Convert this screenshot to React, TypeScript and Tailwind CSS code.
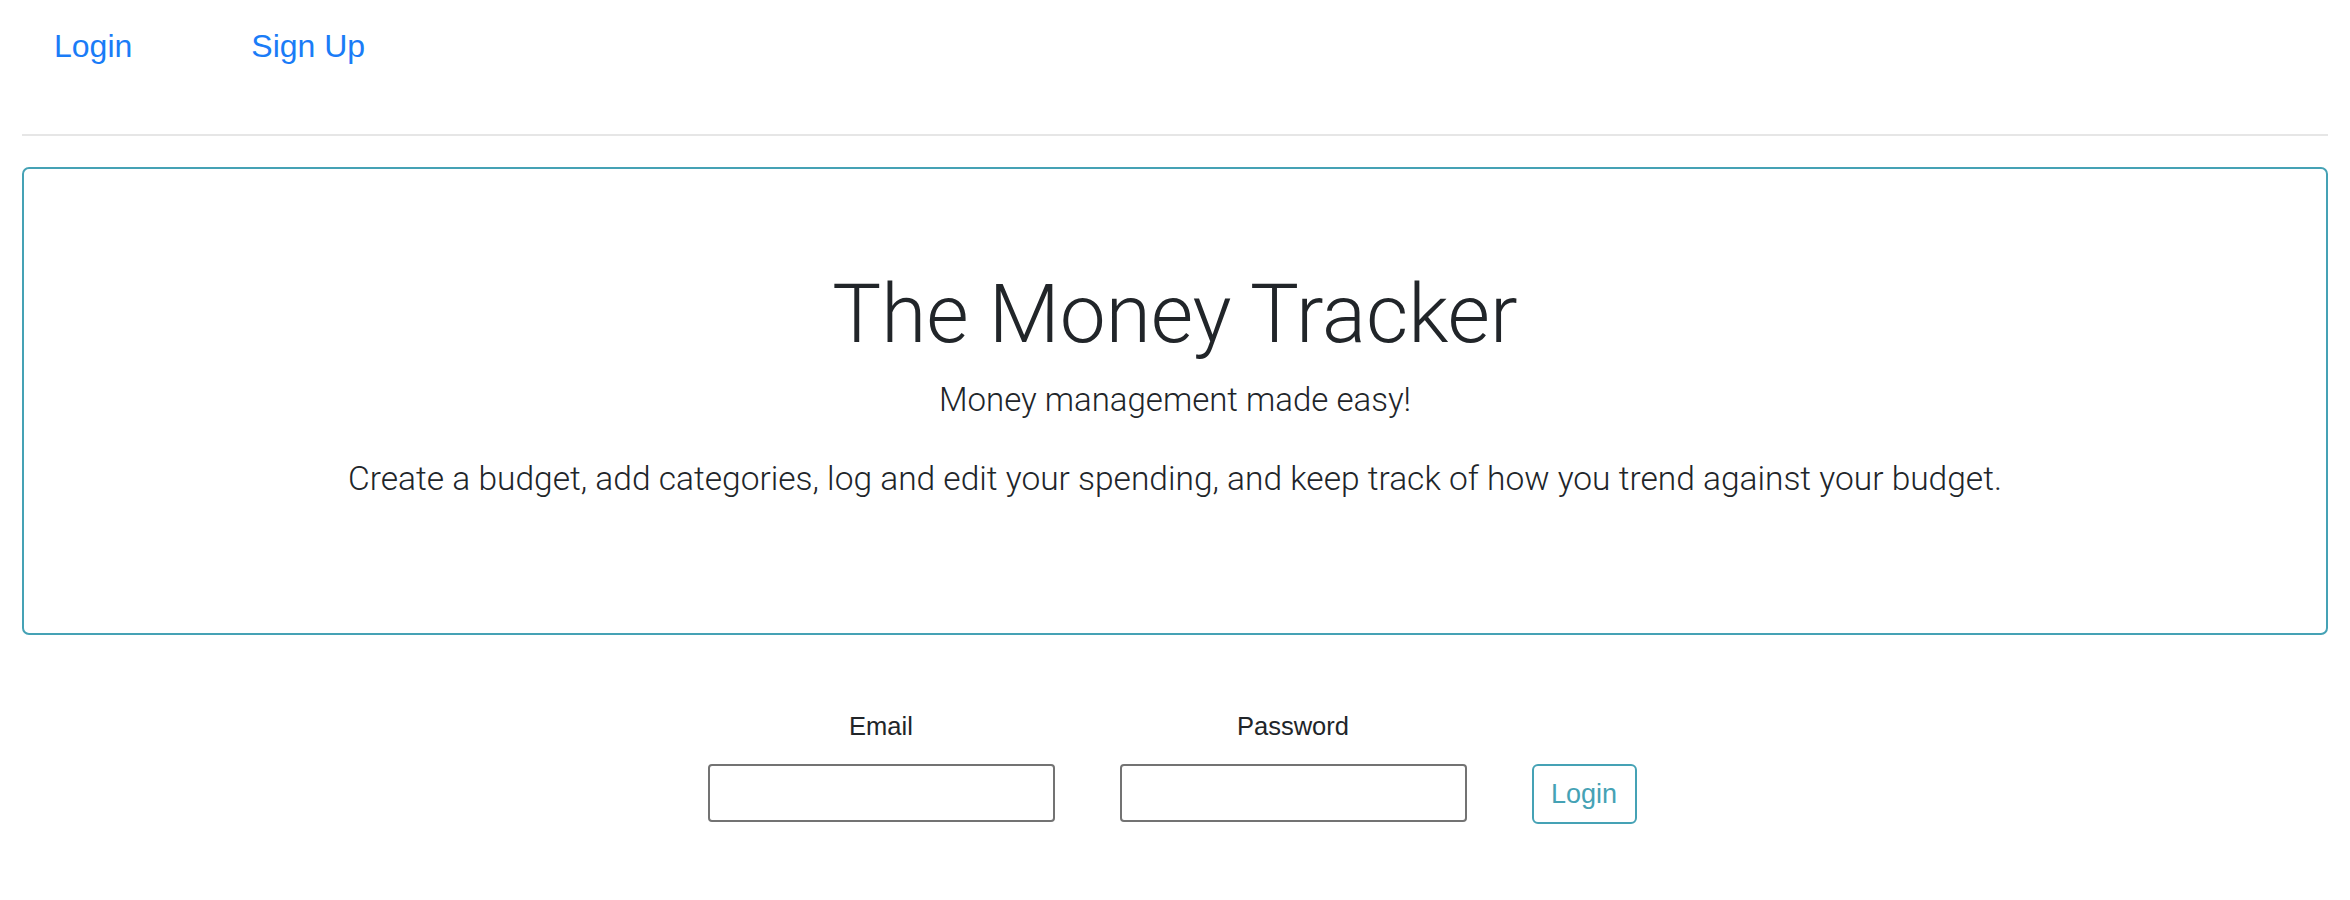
import React, { useState } from "react";

const sans = "font-['Liberation_Sans','Helvetica_Neue',Arial,sans-serif]";
const light = "font-['Roboto','Helvetica_Neue',Arial,sans-serif] font-light";

const App: React.FC = () => {
  const [email, setEmail] = useState("");
  const [password, setPassword] = useState("");

  return (
    <div className={`min-h-[900px] bg-white px-[22px] text-[#212529] ${sans}`}>
      <nav className="flex h-[90px] items-center gap-[119px] pl-[32px] pt-[2px]">
        <a href="#" className="text-[32px] leading-[36px] text-[#1a7cf7]">
          Login
        </a>
        <a href="#" className="text-[32px] leading-[36px] text-[#1a7cf7]">
          Sign Up
        </a>
      </nav>

      <hr className="mt-[44px] border-t-2 border-[#e6e6e6]" />

      <div className="mt-[31px] flex h-[468px] flex-col items-center rounded-[7px] border-2 border-[#45a2b5] pt-[97px] text-center">
        <h1 className={`${light} text-[82px] leading-[96px] text-[#212529]`}>The Money Tracker</h1>
        <p className={`${light} mt-[20px] text-[33px] leading-[36px]`}>Money management made easy!</p>
        <p className={`${light} mt-[43px] text-[33.5px] leading-[36px]`}>
          Create a budget, add categories, log and edit your spending, and keep track of how you trend against your
          budget.
        </p>
      </div>

      <form
        className="mt-[77px] flex items-start justify-center gap-[65px] pr-[6px]"
        onSubmit={(e) => e.preventDefault()}
      >
        <div className="flex flex-col items-center gap-[24px]">
          <label className="text-[25.5px] leading-[28px]">Email</label>
          <input
            type="email"
            value={email}
            onChange={(e) => setEmail(e.target.value)}
            className="h-[58px] w-[347px] rounded-[4px] border-2 border-[#737373] px-2 text-[24px] outline-none"
          />
        </div>
        <div className="flex flex-col items-center gap-[24px]">
          <label className="text-[25.5px] leading-[28px]">Password</label>
          <input
            type="password"
            value={password}
            onChange={(e) => setPassword(e.target.value)}
            className="h-[58px] w-[347px] rounded-[4px] border-2 border-[#737373] px-2 text-[24px] outline-none"
          />
        </div>
        <button
          type="submit"
          className="mt-[52px] h-[60px] w-[105px] rounded-[6px] border-2 border-[#45a2b5] text-[27px] text-[#45a2b5]"
        >
          Login
        </button>
      </form>
    </div>
  );
};

export default App;
